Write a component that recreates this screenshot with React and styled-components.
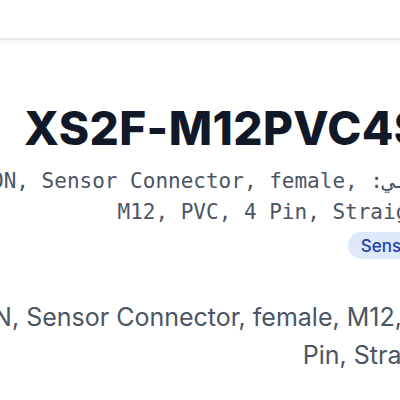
import React from 'react'
import styled, { createGlobalStyle } from 'styled-components'

const GlobalStyle = createGlobalStyle`
  html, body {
    margin: 0;
    padding: 0;
    background: #ffffff;
    overflow: hidden;
  }
  body {
    width: 400px;
    font-family: Inter, "Noto Sans", sans-serif;
  }
`

const Page = styled.div`
  width: 400px;
  height: 400px;
  overflow: hidden;
  display: flex;
  flex-direction: column;
`
const Header = styled.header`
  height: 38px;
  flex-shrink: 0;
  background: #ffffff;
  border-bottom: 2px solid #e8e8e8;
  box-shadow: 0 2px 6px rgba(0, 0, 0, 0.06);
`
const Main = styled.main`
  padding: 61px 24px 0;
  display: flex;
  flex-direction: column;
`
const Title = styled.h1`
  margin: 0;
  font-family: Inter, "Liberation Sans", sans-serif;
  font-size: 46px;
  line-height: 55px;
  font-weight: 800;
  letter-spacing: 0.4px;
  color: #111827;
  white-space: nowrap;
`
const Spec = styled.div`
  margin: 10px -184px 0 -300px;
  direction: rtl;
  text-align: right;
  font-family: "DejaVu Sans Mono", "Liberation Mono", monospace;
  font-size: 21px;
  line-height: 31px;
  color: #4b5563;
`
const Line = styled.span`
  display: block;
  white-space: nowrap;
`
const Tags = styled.div`
  margin: 4px -145px 0 0;
  display: flex;
  justify-content: flex-end;
`
const Tag = styled.span`
  height: 27px;
  padding: 0 13px;
  border-radius: 14px;
  background: #dde9fb;
  color: #1e40af;
  font-size: 17px;
  font-weight: 500;
  display: flex;
  align-items: center;
  white-space: nowrap;
`
const Description = styled.p`
  margin: 39px -114px 0 -400px;
  direction: rtl;
  text-align: right;
  font-size: 25px;
  line-height: 38px;
  color: #4b5563;
`

export default function App () {
  return (
    <>
      <GlobalStyle />
      <Page>
        <Header />
        <Main>
          <Title>XS2F-M12PVC4S2</Title>
          <Spec>
            <Line>{'الوصف التفصيلي: SCHNEIDER ELECTRIC XS2F ON, Sensor Connector, female,\u200E'}</Line>
            <Line>M12, PVC, 4 Pin, Straight, 2m cable</Line>
          </Spec>
          <Tags>
            <Tag>Sensor Connector</Tag>
          </Tags>
          <Description>
            <Line>SCHNEIDER ELECTRIC XS2F ON, Sensor Connector, female, M12, PVC, 4</Line>
            <Line>Pin, Straight 2m</Line>
          </Description>
        </Main>
      </Page>
    </>
  )
}
